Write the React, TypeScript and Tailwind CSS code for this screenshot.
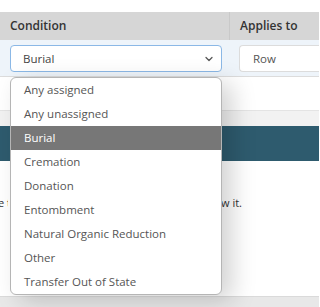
import React from 'react'
import { ChevronDown } from 'lucide-react'

const options = [
  'Any assigned',
  'Any unassigned',
  'Burial',
  'Cremation',
  'Donation',
  'Entombment',
  'Natural Organic Reduction',
  'Other',
  'Transfer Out of State',
]

export default function App() {
  const selected = 'Burial'
  return (
    <div className="relative w-[319px] h-[307px] overflow-hidden bg-white font-['Open_Sans',sans-serif] text-[11.5px] text-[#333]">
      <div className="flex flex-col h-full">
        <div className="h-[12px] shrink-0" />

        {/* header */}
        <div className="flex h-[28px] shrink-0 bg-[#d6d6d6] text-[12px]">
          <div className="w-[230px] flex items-center pl-[10px] font-semibold border-r border-[#c9c9c9]">Condition</div>
          <div className="flex items-center pl-[10px] font-semibold">Applies to</div>
        </div>

        {/* edit row */}
        <div className="flex h-[37px] shrink-0 bg-[#eef4fa] border-b border-[#dcdcdc]">
          <div className="w-[230px] pl-[10px] pt-[5px]">
            <div className="flex items-center justify-between w-[212px] h-[27px] bg-white border border-[#8bb8e6] rounded-[4px] pl-[12px] pr-[6px] text-[#444]">
              <span>{selected}</span>
              <ChevronDown className="w-[12px] h-[12px] text-[#555]" strokeWidth={2.5} />
            </div>
          </div>
          <div className="flex-1 pl-[9px] pt-[5px]">
            <div className="flex items-center h-[27px] bg-white border border-[#dcdcdc] border-r-0 rounded-l-[4px] pl-[13px] text-[#555]">Row</div>
          </div>
        </div>

        <div className="h-[33px] shrink-0" />
        <div className="h-[16px] shrink-0 bg-[#f2f2f2] border-t border-[#e4e4e4]" />
        <div className="h-[35px] shrink-0 bg-[#2e5b6e]" />
        <div className="h-[35px] shrink-0" />

        {/* text partly hidden under the menu */}
        <div className="flex h-[14px] shrink-0 text-[11px] leading-[14px] text-[#333] whitespace-nowrap">
          <span className="w-[10px] -ml-[2px] overflow-hidden">e t</span>
          <span className="ml-[213px]">w it.</span>
        </div>

        <div className="flex-1" />
        <div className="h-[11px] shrink-0 bg-[#e8e8e8] border-t border-[#dadada]" />
      </div>

      {/* open dropdown */}
      <div className="absolute left-[10px] top-[77px] w-[212px] bg-white border border-[#b5b5b5] rounded-[6px] overflow-hidden shadow-[10px_6px_24px_rgba(0,0,0,0.18)]">
        {options.map((o) => (
          <div
            key={o}
            className={
              o === selected
                ? 'h-[24px] flex items-center pl-[13px] bg-[#777777] text-white'
                : 'h-[24px] flex items-center pl-[13px] text-[#555]'
            }
          >
            {o}
          </div>
        ))}
      </div>
    </div>
  )
}
